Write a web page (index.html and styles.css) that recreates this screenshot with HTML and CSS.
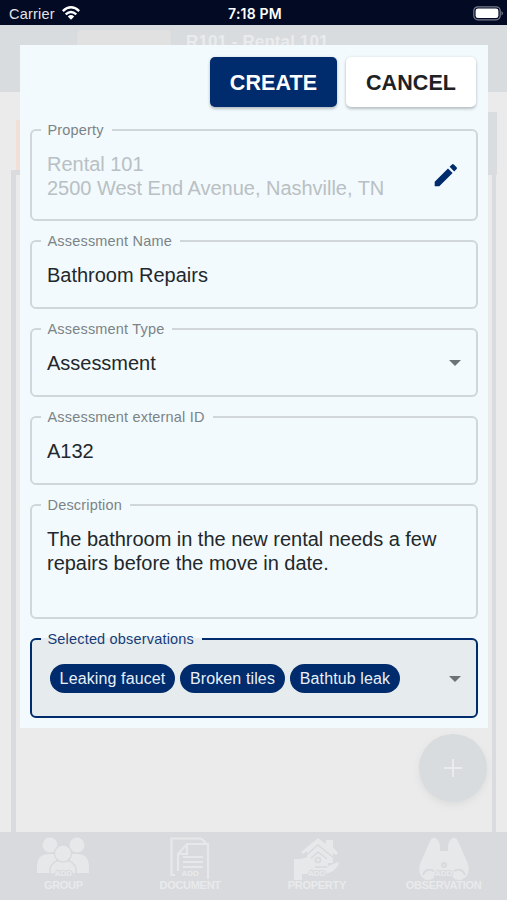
FILE: index.html
```html
<!DOCTYPE html>
<html lang="en">
<head>
<meta charset="utf-8">
<meta name="viewport" content="width=device-width">
<title>Create assessment</title>
<link rel="stylesheet" href="styles.css">
</head>
<body>
<div class="screen">
  <header class="status">
    <div class="carrier"><span>Carrier</span>
      <svg width="18" height="14" viewBox="0 0 18 14" fill="none" stroke="#fff" stroke-width="2.4"><path d="M.8 5.1Q9-2.5 17.2 5.1M3.7 8.300Q9 3.500 14.3 8.300"/><path d="M9 13.7 5.8 10.4Q9 7.5 12.2 10.4Z" fill="#fff" stroke="none"/></svg>
    </div>
    <span class="time">7:18 PM</span>
    <svg class="battery" width="31" height="15" viewBox="0 0 31 15"><rect x=".8" y=".8" width="26.4" height="13" rx="4" fill="none" stroke="#777b8b" stroke-width="1.2"/><rect x="2.6" y="2.5" width="22.8" height="9.6" rx="2.4" fill="#fff"/><path d="M28.5 5v4.6q3-2.3 0-4.6" fill="#777b8b"/></svg>
  </header>
  <div class="appbar"><span class="logo"></span><span class="title">R101 - Rental 101</span></div>
  <main class="page">
    <div class="tabs"><span class="tab-left"></span><span class="tab-right"></span></div>
    <div class="sheet"></div>
  </main>
  <nav class="nav">
    <div class="item group">
      <svg width="54" height="38" viewBox="0 0 54 38"><g fill="#e6e8e9"><circle cx="14" cy="8" r="7.5"/><circle cx="41" cy="8" r="7.5"/><path d="M1 36V28Q2 17 12 17H20V36ZM53 36V28Q52 17 42 17H34V36Z"/></g><g fill="#e6e8e9" stroke="#d8dadd" stroke-width="1.3"><path d="M14 37V32Q16 23 27 23T40 32V37Z"/><circle cx="27" cy="16.500" r="8.500"/></g></svg>
      <span class="add">ADD</span><span class="label">GROUP</span>
    </div>
    <div class="item document">
      <svg width="40" height="42" viewBox="0 0 40 42" fill="none" stroke="#e6e8e9" stroke-width="2.2"><path d="M5 38H1.500V1.500H31L36 6"/><path d="M8 34V17L17 7H38V42M8 17H17V7M13 20H33M13 25H33M13 30H33"/></svg>
      <span class="add">ADD</span><span class="label">DOCUMENT</span>
    </div>
    <div class="item">
      <svg width="48" height="44" viewBox="0 0 48 44"><path d="M33 3H40V10L45 16 43 18 40 16V26H14V14L10 17 8 15 25 1 33 7Z" fill="#e6e8e9"/><path d="M11 20 25 8 41 21M16 23 25 15 34 22" fill="none" stroke="#d8dadd" stroke-width="1.5"/><path d="M1 22H7L15 20 26 25H34Q37 28 33 30L45 25Q48 27 40 34L33 37H9V43H1Z" fill="#e6e8e9"/><path d="M22 30H34" fill="none" stroke="#d8dadd" stroke-width="1.5"/><circle cx="25" cy="23" r="2.500" fill="none" stroke="#d8dadd" stroke-width="1.5"/></svg>
      <span class="add">ADD</span><span class="label">PROPERTY</span>
    </div>
    <div class="item">
      <svg width="52" height="44" viewBox="0 0 52 44"><path d="M12 4Q15-2 20 3L22 8V14H30V8L32 3Q37-2 40 4L43 11 50 27Q53 39 43 43 34 44 33 35H19Q17 44 8 43-1 39 2 27L9 11Z" fill="#e6e8e9"/><g fill="none" stroke="#d8dadd" stroke-width="2"><path d="M5 38Q8 30 16 34M47 38Q44 30 36 34"/><circle cx="26" cy="28" r="2"/></g></svg>
      <span class="add">ADD</span><span class="label">OBSERVATION</span>
    </div>
  </nav>
  <button class="fab" aria-label="Add"><svg width="18" height="18" viewBox="0 0 18 18" stroke="#ebebeb" stroke-width="2"><path d="M0 9H18M9 0V18"/></svg></button>
  <form class="dialog">
    <div class="actions"><button type="button" class="btn primary">CREATE</button><button type="button" class="btn">CANCEL</button></div>
    <fieldset class="field property"><legend>Property</legend>
      <div class="value">Rental 101<br>2500 West End Avenue, Nashville, TN</div>
      <svg class="pencil" width="24" height="24" viewBox="0 0 24 24" fill="#002b6c"><path d="M.7 18.700V23.300H5.300L18.600 10 14 5.400ZM22.600 6Q23.500 5.100 22.600 4.200L19.800 1.400Q18.900.5 18 1.400L15.600 3.800 20.200 8.400Z"/></svg>
    </fieldset>
    <fieldset class="field"><legend>Assessment Name</legend><div class="value">Bathroom Repairs</div></fieldset>
    <fieldset class="field"><legend>Assessment Type</legend><div class="value">Assessment</div><i class="caret"></i></fieldset>
    <fieldset class="field"><legend>Assessment external ID</legend><div class="value">A132</div></fieldset>
    <fieldset class="field description"><legend>Description</legend><div class="value">The bathroom in the new rental needs a few<br>repairs before the move in date.</div></fieldset>
    <fieldset class="field selected"><legend>Selected observations</legend>
      <div class="chips"><span class="chip c1">Leaking faucet</span><span class="chip c2">Broken tiles</span><span class="chip c3">Bathtub leak</span></div><i class="caret"></i>
    </fieldset>
  </form>
</div>
</body>
</html>
```

FILE: styles.css
```css
* { box-sizing: border-box; }
body { margin: 0; font-family: "Liberation Sans", Arial, sans-serif; }
.screen { position: relative; width: 507px; height: 900px; overflow: hidden; display: flex; flex-direction: column; background: #ebebeb; }
.status { height: 25px; flex: none; padding: 0 6px 0 9px; background: #020a24; color: #fff; display: grid; grid-template-columns: 1fr auto 1fr; align-items: center; }
.carrier { display: flex; gap: 7px; align-items: center; color: #e2e4e8; font-size: 14.5px; letter-spacing: .2px; padding-top: 2px; }
.carrier svg { margin-top: -2px; }
.time { font: 600 14px Inter, sans-serif; letter-spacing: .2px; padding-top: 2px; }
.battery { justify-self: end; margin-top: 2px; margin-right: -3px; }
.appbar { height: 67px; flex: none; background: #d9dcde; display: flex; align-items: flex-start; gap: 15px; padding: 5px 0 0 77px; }
.logo { width: 94px; height: 50px; border-radius: 5px; background: #e1e1e2; }
.title { color: #e9ebed; font-size: 17px; font-weight: 700; letter-spacing: .1px; margin-top: 2px; }
.page { flex: 1; padding: 20px 11px 0; display: flex; flex-direction: column; }
.tabs { height: 58px; display: flex; justify-content: space-between; padding: 0 0 0 5px; }
.tab-left { width: 10px; margin-top: 8px; background: #f2dfd7; }
.tab-right { width: 14px; height: 63px; margin-right: -1px; background: #d9dddf; }
.sheet { flex: 1; border: solid #d9dbdf; border-width: 5px 4px 0 5px; }
.nav { height: 68px; flex: none; background: #d8dadd; display: grid; grid-template-columns: repeat(4, 1fr); color: #e9eaec; }
.item { display: flex; flex-direction: column; align-items: center; padding-top: 5px; font-weight: 700; }
.item svg { flex: none; margin-bottom: -12px; }
.document svg { margin-bottom: -10px; }
.group svg { margin-bottom: -6px; }
.add { font-size: 8px; line-height: 10px; -webkit-text-stroke: 2px #d8dadd; paint-order: stroke fill; }
.label { font-size: 11px; line-height: 12px; letter-spacing: -.3px; -webkit-text-stroke: 1px #d8dadd; paint-order: stroke fill; }
.fab { position: absolute; left: 419px; top: 734px; width: 68px; height: 68px; border: 0; border-radius: 50%; background: #d8dcde; box-shadow: 0 3px 7px #dcddde; display: grid; place-items: center; padding: 0; }
.dialog { position: absolute; left: 20px; top: 45px; width: 468px; height: 683px; margin: 0; padding: 12px 10px 0; background: #f2fafd; display: flex; flex-direction: column; gap: 10px; }
.actions { display: flex; justify-content: flex-end; gap: 9px; height: 53px; padding-right: 2px; align-items: flex-start; }
.btn { width: 130px; height: 50px; border: 0; border-radius: 5px; padding: 2px 0 0; font: 700 21.5px "Liberation Sans", Arial, sans-serif; letter-spacing: .1px; background: #fff; color: #202124; box-shadow: 0 2px 3px #b8c0c4, 0 0 3px #dce3e6; }
.btn.primary { width: 127px; background: #002b6c; color: #fff; }
.field { position: relative; height: 78px; flex: none; min-width: 0; margin: 0; padding: 0 16px 0 9px; border: 2px solid #d0d6d9; border-radius: 6px; color: #22282b; font-size: 20px; line-height: 23.5px; }
.field legend { height: 20px; padding: 0 8px 0 6.5px; font-size: 14.5px; line-height: 20px; letter-spacing: .18px; color: #7c8387; }
.value { padding: 13px 0 0 6px; letter-spacing: -.02px; white-space: nowrap; }
.property { height: 101px; }
.property .value { color: #b9c0c3; }
.pencil { position: absolute; right: 18px; top: 23px; }
.caret { position: absolute; right: 15px; top: 21px; border: 6px solid transparent; border-top-color: #6d7375; border-bottom: 0; }
.description { height: 124px; }
.selected { height: 89px; border-color: #002b6c; background: #e6ecee; }
.selected legend { color: #173c79; }
.selected .caret { top: 27px; }
.chips { display: flex; gap: 5px; padding: 15px 0 0 9px; }
.chip { height: 29px; border-radius: 15px; background: #002b6c; color: #e9f0f8; font-size: 16px; line-height: 29px; text-align: center; letter-spacing: .12px; white-space: nowrap; }
.c1 { width: 125px; }
.c2 { width: 105px; }
.c3 { width: 110px; }
```
